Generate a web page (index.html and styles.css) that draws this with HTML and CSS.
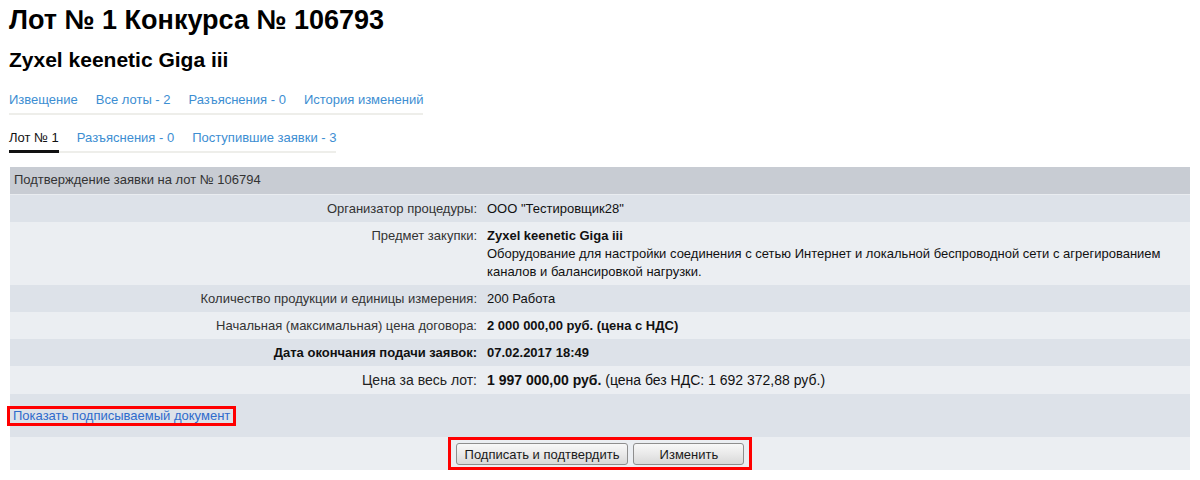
FILE: index.html
```html
<!DOCTYPE html>
<html lang="ru">
<head>
<meta charset="utf-8">
<title>Лот № 1 Конкурса № 106793</title>
<link rel="stylesheet" href="styles.css">
</head>
<body>
<h1 class="title">Лот № 1 Конкурса № 106793</h1>
<h2 class="subtitle">Zyxel keenetic Giga iii</h2>
<nav class="tabs tabs-main">
  <a class="tab" href="#">Извещение</a>
  <a class="tab" href="#">Все лоты - 2</a>
  <a class="tab" href="#">Разъяснения - 0</a>
  <a class="tab" href="#">История изменений</a>
</nav>
<nav class="tabs tabs-sub">
  <a class="tab active" href="#">Лот № 1</a>
  <a class="tab" href="#">Разъяснения - 0</a>
  <a class="tab" href="#">Поступившие заявки - 3</a>
</nav>
<table class="form">
  <tr class="head"><td colspan="2">Подтверждение заявки на лот № 106794</td></tr>
  <tr class="dark"><td class="label">Организатор процедуры:</td><td class="value">ООО "Тестировщик28"</td></tr>
  <tr class="light"><td class="label">Предмет закупки:</td><td class="value"><b>Zyxel keenetic Giga iii</b><br>Оборудование для настройки соединения с сетью Интернет и локальной беспроводной сети с агрегированием<br>каналов и балансировкой нагрузки.</td></tr>
  <tr class="dark"><td class="label">Количество продукции и единицы измерения:</td><td class="value">200 Работа</td></tr>
  <tr class="light"><td class="label">Начальная (максимальная) цена договора:</td><td class="value"><b>2 000 000,00 руб. (цена с НДС)</b></td></tr>
  <tr class="dark"><td class="label"><b>Дата окончания подачи заявок:</b></td><td class="value"><b>07.02.2017 18:49</b></td></tr>
  <tr class="light big"><td class="label">Цена за весь лот:</td><td class="value"><b>1 997 000,00 руб.</b> (цена без НДС: 1 692 372,88 руб.)</td></tr>
  <tr class="dark"><td class="link-cell" colspan="2"><span class="mark"><a class="doc-link" href="#">Показать подписываемый документ</a></span></td></tr>
  <tr class="light"><td class="btn-cell" colspan="2"><span class="mark mark-btns"><button class="btn" type="button">Подписать и подтвердить</button><button class="btn btn-edit" type="button">Изменить</button></span></td></tr>
</table>
</body>
</html>
```
FILE: styles.css
```css
html, body {
  margin: 0;
  padding: 0;
  background: #ffffff;
}
body {
  padding: 0 10px 0 9px;
  font-family: "Liberation Sans", Arial, sans-serif;
  font-size: 13px;
  color: #000;
}
.title {
  margin: 0;
  padding-top: 4px;
  font-size: 27px;
  line-height: 32px;
  font-weight: bold;
  color: #000;
}
.subtitle {
  margin: 12px 0 0;
  font-size: 21px;
  line-height: 23px;
  font-weight: bold;
  color: #000;
}
.tabs {
  display: flex;
  width: max-content;
  gap: 18px;
  border-bottom: 2px solid #eeeeea;
  line-height: 15px;
}
.tabs-main {
  margin-top: 21px;
}
.tabs-sub {
  margin-top: 15px;
}
.tab {
  display: block;
  padding-bottom: 6px;
  margin-bottom: -2px;
  border-bottom: 2px solid transparent;
  color: #3d8ed2;
  text-decoration: none;
  font-size: 13px;
}
.tabs-main .tab {
  border-bottom: none;
  margin-bottom: 0;
}
.tab.active {
  color: #111;
  border-bottom: 3px solid #111;
  padding-bottom: 5px;
}
.form {
  margin-top: 14px;
  margin-left: 1px;
  width: 1180px;
  border-collapse: collapse;
  border-spacing: 0;
  font-size: 13px;
  color: #333;
}
.form td {
  padding: 5px 4px 4px;
  line-height: 18px;
  vertical-align: top;
}
.form .head td {
  background: #c8ccd3;
  height: 16px;
  padding: 4px 4px 5px;
  border-bottom: 1px solid #e9ecf0;
}
.form .dark td {
  background: #dde2e9;
}
.form .light td {
  background: #ebeef2;
}
.form .label {
  width: 40%;
  text-align: right;
  padding-right: 5px;
}
.form .value {
  padding-left: 5px;
  color: #111;
}
.form .label b,
.form .value b {
  color: #111;
}
.form .big td {
  font-size: 14px;
  line-height: 19px;
}
.form .big .label {
  color: #222;
}
.form .link-cell {
  padding: 12px 0 11px;
  line-height: 14px;
}
.mark {
  display: inline-block;
  border: 3px solid #ff0000;
}
.link-cell .mark {
  margin-left: -3px;
  padding: 0 3px;
  line-height: 14px;
}
.doc-link {
  color: #2f6bcc;
  text-decoration: none;
  font-size: 13px;
}
.form .btn-cell {
  padding: 0;
  text-align: center;
  line-height: 0;
}
.mark-btns {
  display: inline-flex;
  gap: 5px;
  padding: 3px 5px 2px;
  line-height: normal;
}
.btn {
  height: 22px;
  padding: 0 8px;
  border: 1px solid #8e8e8e;
  border-radius: 3px;
  background: linear-gradient(#f8f8f8, #e9e9e9 50%, #d9d9d9);
  font-family: "Liberation Sans", Arial, sans-serif;
  font-size: 13px;
  color: #1a1a1a;
  cursor: pointer;
}
.btn-edit {
  width: 111px;
}
```
